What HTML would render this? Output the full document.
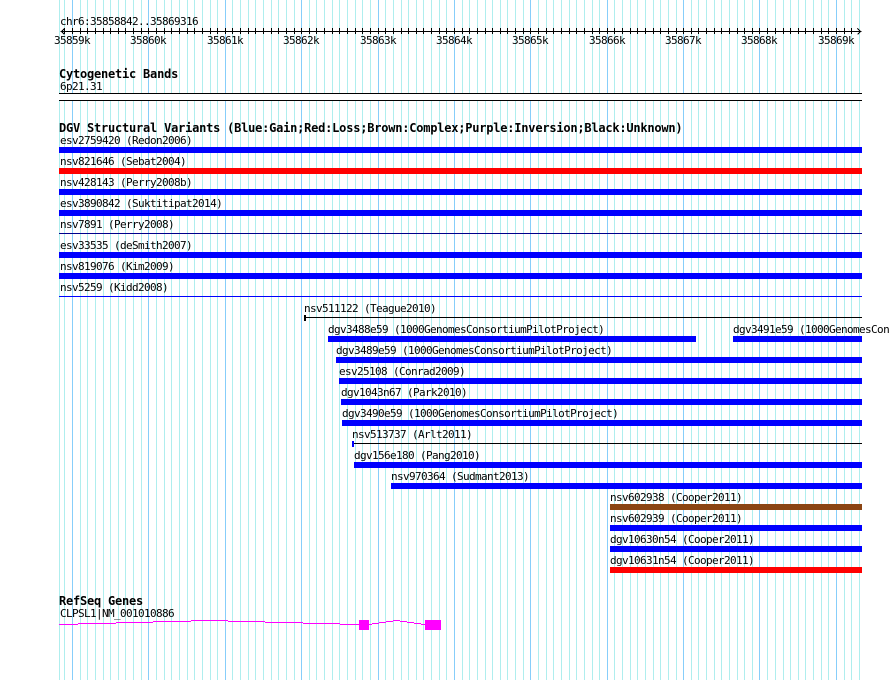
<!DOCTYPE html>
<html><head><meta charset="utf-8"><title>Genome browser</title>
<style>
html,body{margin:0;padding:0;background:#fff}
svg{display:block}
text{font-family:"DejaVu Sans Mono","Liberation Mono",monospace;font-size:11px;letter-spacing:-.62px;fill:#000}
.b{font-size:12px;font-weight:bold;letter-spacing:-.22px}
</style></head><body>
<svg width="890" height="680" viewBox="0 0 890 680" xmlns="http://www.w3.org/2000/svg">
<g shape-rendering="crispEdges" fill="none" transform="translate(.5,0)">
<path stroke="#afeeee" d="M59 0V680M64 0V680M80 0V680M87 0V680M95 0V680M103 0V680M110 0V680M118 0V680M125 0V680M133 0V680M141 0V680M156 0V680M164 0V680M171 0V680M179 0V680M187 0V680M194 0V680M202 0V680M210 0V680M217 0V680M232 0V680M240 0V680M248 0V680M255 0V680M263 0V680M271 0V680M278 0V680M286 0V680M294 0V680M309 0V680M316 0V680M324 0V680M332 0V680M339 0V680M347 0V680M355 0V680M362 0V680M370 0V680M385 0V680M393 0V680M401 0V680M408 0V680M416 0V680M423 0V680M431 0V680M439 0V680M446 0V680M462 0V680M469 0V680M477 0V680M485 0V680M492 0V680M500 0V680M507 0V680M515 0V680M523 0V680M538 0V680M546 0V680M553 0V680M561 0V680M569 0V680M576 0V680M584 0V680M592 0V680M599 0V680M614 0V680M622 0V680M630 0V680M637 0V680M645 0V680M653 0V680M660 0V680M668 0V680M676 0V680M691 0V680M698 0V680M706 0V680M714 0V680M721 0V680M729 0V680M737 0V680M744 0V680M752 0V680M767 0V680M775 0V680M783 0V680M790 0V680M798 0V680M805 0V680M813 0V680M821 0V680M828 0V680M844 0V680M851 0V680M859 0V680"/>
<path stroke="#87cefa" d="M72 0V680M148 0V680M225 0V680M301 0V680M378 0V680M454 0V680M530 0V680M607 0V680M683 0V680M759 0V680M836 0V680"/>
<path stroke="#000" d="M60 31.5H861M64 28V34M72 28V34M80 28V34M87 28V34M95 28V34M103 28V34M110 28V34M118 28V34M125 28V34M133 28V34M141 28V34M148 28V34M156 28V34M164 28V34M171 28V34M179 28V34M187 28V34M194 28V34M202 28V34M210 28V34M217 28V34M225 28V34M232 28V34M240 28V34M248 28V34M255 28V34M263 28V34M271 28V34M278 28V34M286 28V34M294 28V34M301 28V34M309 28V34M316 28V34M324 28V34M332 28V34M339 28V34M347 28V34M355 28V34M362 28V34M370 28V34M378 28V34M385 28V34M393 28V34M401 28V34M408 28V34M416 28V34M423 28V34M431 28V34M439 28V34M446 28V34M454 28V34M462 28V34M469 28V34M477 28V34M485 28V34M492 28V34M500 28V34M507 28V34M515 28V34M523 28V34M530 28V34M538 28V34M546 28V34M553 28V34M561 28V34M569 28V34M576 28V34M584 28V34M592 28V34M599 28V34M607 28V34M614 28V34M622 28V34M630 28V34M637 28V34M645 28V34M653 28V34M660 28V34M668 28V34M676 28V34M683 28V34M691 28V34M698 28V34M706 28V34M714 28V34M721 28V34M729 28V34M737 28V34M744 28V34M752 28V34M759 28V34M767 28V34M775 28V34M783 28V34M790 28V34M798 28V34M805 28V34M813 28V34M821 28V34M828 28V34M836 28V34M844 28V34M851 28V34"/>
<path stroke="#000" d="M64 28.5L61 31.5L64 34.5M857 28.5L860 31.5L857 34.5"/>
</g>
<g shape-rendering="crispEdges">
<rect x="59" y="93" width="803" height="8" fill="#fff"/>
<rect x="59" y="93" width="803" height="1" fill="#000"/>
<rect x="59" y="100" width="803" height="1" fill="#000"/>
<rect x="59" y="147" width="803" height="6" fill="#00f"/>
<rect x="59" y="168" width="803" height="6" fill="#f00"/>
<rect x="59" y="189" width="803" height="6" fill="#00f"/>
<rect x="59" y="210" width="803" height="6" fill="#00f"/>
<rect x="59" y="233" width="803" height="1" fill="#00008b"/>
<rect x="59" y="252" width="803" height="6" fill="#00f"/>
<rect x="59" y="273" width="803" height="6" fill="#00f"/>
<rect x="59" y="296" width="803" height="1" fill="#00f"/>
<rect x="304" y="317" width="558" height="1" fill="#000"/>
<rect x="304" y="315" width="2" height="6" fill="#000"/>
<rect x="328" y="336" width="368" height="6" fill="#00f"/>
<rect x="733" y="336" width="129" height="6" fill="#00f"/>
<rect x="336" y="357" width="526" height="6" fill="#00f"/>
<rect x="339" y="378" width="523" height="6" fill="#00f"/>
<rect x="341" y="399" width="521" height="6" fill="#00f"/>
<rect x="342" y="420" width="520" height="6" fill="#00f"/>
<rect x="352" y="443" width="510" height="1" fill="#000"/>
<rect x="352" y="441" width="2" height="6" fill="#00f"/>
<rect x="354" y="462" width="508" height="6" fill="#00f"/>
<rect x="391" y="483" width="471" height="6" fill="#00f"/>
<rect x="610" y="504" width="252" height="6" fill="#8b4513"/>
<rect x="610" y="525" width="252" height="6" fill="#00f"/>
<rect x="610" y="546" width="252" height="6" fill="#00f"/>
<rect x="610" y="567" width="252" height="6" fill="#f00"/>
<path fill="none" stroke="#f0f" d="M59 624.5H78M78 623.5H116M116 622.5H153M153 621.5H191M191 620.5H228M228 621.5H265M265 622.5H303M303 623.5H340M340 624.5H359M369 624.5H372M372 623.5H379M379 622.5H386M386 621.5H393M393 620.5H400M400 621.5H407M407 622.5H414M414 623.5H421M421 624.5H425"/>
<rect x="359" y="620" width="10" height="10" fill="#f0f"/>
<rect x="425" y="620" width="16" height="10" fill="#f0f"/>
</g>
<text x="60" y="25">chr6:35858842..35869316</text>
<text x="54" y="44">35859k</text><text x="130" y="44">35860k</text><text x="207" y="44">35861k</text><text x="283" y="44">35862k</text><text x="360" y="44">35863k</text><text x="436" y="44">35864k</text><text x="512" y="44">35865k</text><text x="589" y="44">35866k</text><text x="665" y="44">35867k</text><text x="741" y="44">35868k</text><text x="818" y="44">35869k</text>
<text class="b" x="59" y="78">Cytogenetic Bands</text>
<text x="60" y="90">6p21.31</text>
<text class="b" x="59" y="132">DGV Structural Variants (Blue:Gain;Red:Loss;Brown:Complex;Purple:Inversion;Black:Unknown)</text>
<text x="60" y="144">esv2759420 (Redon2006)</text>
<text x="60" y="165">nsv821646 (Sebat2004)</text>
<text x="60" y="186">nsv428143 (Perry2008b)</text>
<text x="60" y="207">esv3890842 (Suktitipat2014)</text>
<text x="60" y="228">nsv7891 (Perry2008)</text>
<text x="60" y="249">esv33535 (deSmith2007)</text>
<text x="60" y="270">nsv819076 (Kim2009)</text>
<text x="60" y="291">nsv5259 (Kidd2008)</text>
<text x="304" y="312">nsv511122 (Teague2010)</text>
<text x="328" y="333">dgv3488e59 (1000GenomesConsortiumPilotProject)</text>
<text x="733" y="333">dgv3491e59 (1000GenomesConsortiumPilotProject)</text>
<text x="336" y="354">dgv3489e59 (1000GenomesConsortiumPilotProject)</text>
<text x="339" y="375">esv25108 (Conrad2009)</text>
<text x="341" y="396">dgv1043n67 (Park2010)</text>
<text x="342" y="417">dgv3490e59 (1000GenomesConsortiumPilotProject)</text>
<text x="352" y="438">nsv513737 (Arlt2011)</text>
<text x="354" y="459">dgv156e180 (Pang2010)</text>
<text x="391" y="480">nsv970364 (Sudmant2013)</text>
<text x="610" y="501">nsv602938 (Cooper2011)</text>
<text x="610" y="522">nsv602939 (Cooper2011)</text>
<text x="610" y="543">dgv10630n54 (Cooper2011)</text>
<text x="610" y="564">dgv10631n54 (Cooper2011)</text>
<text class="b" x="59" y="605">RefSeq Genes</text>
<text x="60" y="617">CLPSL1|NM_001010886</text>
</svg>
</body></html>
